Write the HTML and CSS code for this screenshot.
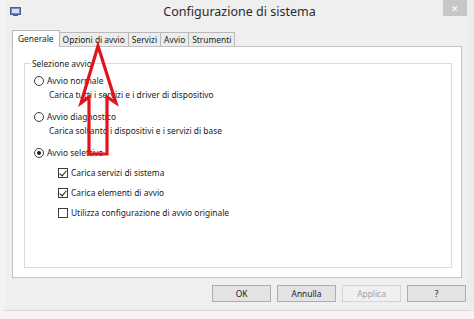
FILE: index.html
```html
<!DOCTYPE html>
<html lang="it">

<head>
    <meta charset="UTF-8">
    <meta name="viewport" content="width=device-width, initial-scale=1.0">
    <title>Configurazione di sistema</title>
    <link rel="stylesheet" href="styles.css">
</head>

<body>
    <div class="window">
        <div class="titlebar">
            <svg class="app-icon" width="11" height="9" viewBox="0 0 11 9">
                <rect x="0.5" y="0.5" width="10" height="7" fill="#6f8fc7" stroke="#4a5f8c"/>
                <rect x="2" y="2" width="7" height="4" fill="#cfe0f5"/>
                <rect x="3" y="8" width="5" height="1" fill="#4a5f8c"/>
            </svg>
            <span class="title">Configurazione di sistema</span>
            <div class="close">&#x2715;</div>
        </div>

        <div class="content">
            <div class="tabs">
                <div class="tab active">Generale</div>
                <div class="tab">Opzioni di avvio</div>
                <div class="tab">Servizi</div>
                <div class="tab">Avvio</div>
                <div class="tab">Strumenti</div>
            </div>

            <div class="panel">
                <fieldset class="group">
                    <legend>Selezione avvio</legend>

                    <div class="option first">
                        <span class="radio"></span> Avvio normale
                    </div>
                    <div class="desc">Carica tutti i servizi e i driver di dispositivo</div>

                    <div class="option">
                        <span class="radio"></span> Avvio diagnostico
                    </div>
                    <div class="desc">Carica soltanto i dispositivi e i servizi di base</div>

                    <div class="option">
                        <span class="radio checked"></span> Avvio selettivo
                    </div>

                    <div class="check">
                        <span class="box checked"></span> Carica servizi di sistema
                    </div>
                    <div class="check">
                        <span class="box checked"></span> Carica elementi di avvio
                    </div>
                    <div class="check">
                        <span class="box"></span> Utilizza configurazione di avvio originale
                    </div>
                </fieldset>
            </div>

            <div class="buttons">
                <button class="btn">OK</button>
                <button class="btn">Annulla</button>
                <button class="btn" disabled>Applica</button>
                <button class="btn">?</button>
            </div>
        </div>
    </div>

    <!-- freccia rossa sopra la scheda -->
    <svg class="arrow" width="474" height="319" viewBox="0 0 474 319">
        <polygon points="98,46 116,103 107,97 107,154 89,154 89,97 81,103"
            fill="none" stroke="#e3131b" stroke-width="3.2" stroke-linejoin="miter"/>
    </svg>
</body>

</html>
```

FILE: styles.css
```css
* {
    box-sizing: border-box;
}

html {
    background-color: #fbf1f4;
}

body {
    margin: 0;
    font-family: "Noto Sans", "Open Sans", sans-serif;
    font-size: 8.4px;
    color: #1a1a1a;
    position: relative;
    width: 474px;
    height: 319px;
    overflow: hidden;
}

.window {
    height: 311px;
    background-color: #efefef;
    border-left: 6px solid #f3f3f3;
    border-right: 7px solid #ececec;
    border-bottom: 1px solid #d8d8d8;
}

.titlebar {
    height: 27px;
    display: grid;
    grid-template-columns: 1fr auto 1fr;
    align-items: start;
}

.app-icon {
    margin: 7px 0 0 4px;
}

.title {
    font-size: 12.5px;
    color: #2b2b2b;
    padding: 3px 0 0 6px;
}

.close {
    justify-self: end;
    width: 24px;
    height: 16px;
    background-color: #c6c6c6;
    color: #fff;
    font-size: 9px;
    display: flex;
    align-items: center;
    justify-content: center;
}

.content {
    padding: 0 0 0 6px;
}

.tabs {
    display: flex;
    align-items: flex-end;
    height: 18px;
    padding-left: 1px;
    margin-top: 1px;
}

.tab {
    height: 14px;
    padding: 0 3px;
    line-height: 13px;
    background-color: #ececec;
    border: 1px solid #b9b9b9;
    border-bottom: none;
    margin-right: -1px;
}

.tab.active {
    height: 17px;
    line-height: 15px;
    background-color: #fff;
    padding: 0 5px;
    margin-left: -1px;
    position: relative;
    z-index: 1;
    margin-bottom: -1px;
}

.panel {
    width: 450px;
    height: 232px;
    background-color: #fff;
    border: 1px solid #c2c2c2;
    padding: 11px 9px 10px 11px;
}

.group {
    margin: 0;
    height: 210px;
    border: 1px solid #dcdcdc;
    padding: 0 0 0 9px;
}

.group legend {
    padding: 0 1px;
    margin-left: -3px;
}

.option,
.check {
    display: flex;
    align-items: center;
    height: 13px;
    gap: 3px;
}

.option {
    margin-top: 9px;
}

.option.first {
    margin-top: 5px;
}

.desc {
    height: 13px;
    line-height: 13px;
    margin-top: 1px;
    padding-left: 15px;
}

.check {
    margin-top: 7px;
    padding-left: 24px;
}

.check:first-of-type {
    margin-top: 8px;
}

.radio {
    width: 10px;
    height: 10px;
    border: 1px solid #3c3c3c;
    border-radius: 50%;
    background-color: #fff;
    display: flex;
    align-items: center;
    justify-content: center;
}

.radio.checked::after {
    content: "";
    width: 4px;
    height: 4px;
    border-radius: 50%;
    background-color: #1a1a1a;
}

.box {
    width: 10px;
    height: 10px;
    border: 1px solid #3c3c3c;
    background-color: #fff;
    position: relative;
}

.box.checked::after {
    content: "";
    position: absolute;
    left: 2px;
    top: 0;
    width: 3px;
    height: 6px;
    border: solid #1a1a1a;
    border-width: 0 1.5px 1.5px 0;
    transform: rotate(40deg);
}

.buttons {
    display: flex;
    justify-content: flex-end;
    gap: 6px;
    padding: 7px 1px 0 0;
}

.btn {
    width: 59px;
    height: 17px;
    font-family: inherit;
    font-size: 8.4px;
    color: #1a1a1a;
    background-color: #e3e3e3;
    border: 1px solid #adadad;
    padding: 0;
}

.btn:disabled {
    color: #a3a3a3;
    background-color: #f0f0f0;
    border-color: #d4d4d4;
}

.arrow {
    position: absolute;
    left: 0;
    top: 0;
    pointer-events: none;
}
```
